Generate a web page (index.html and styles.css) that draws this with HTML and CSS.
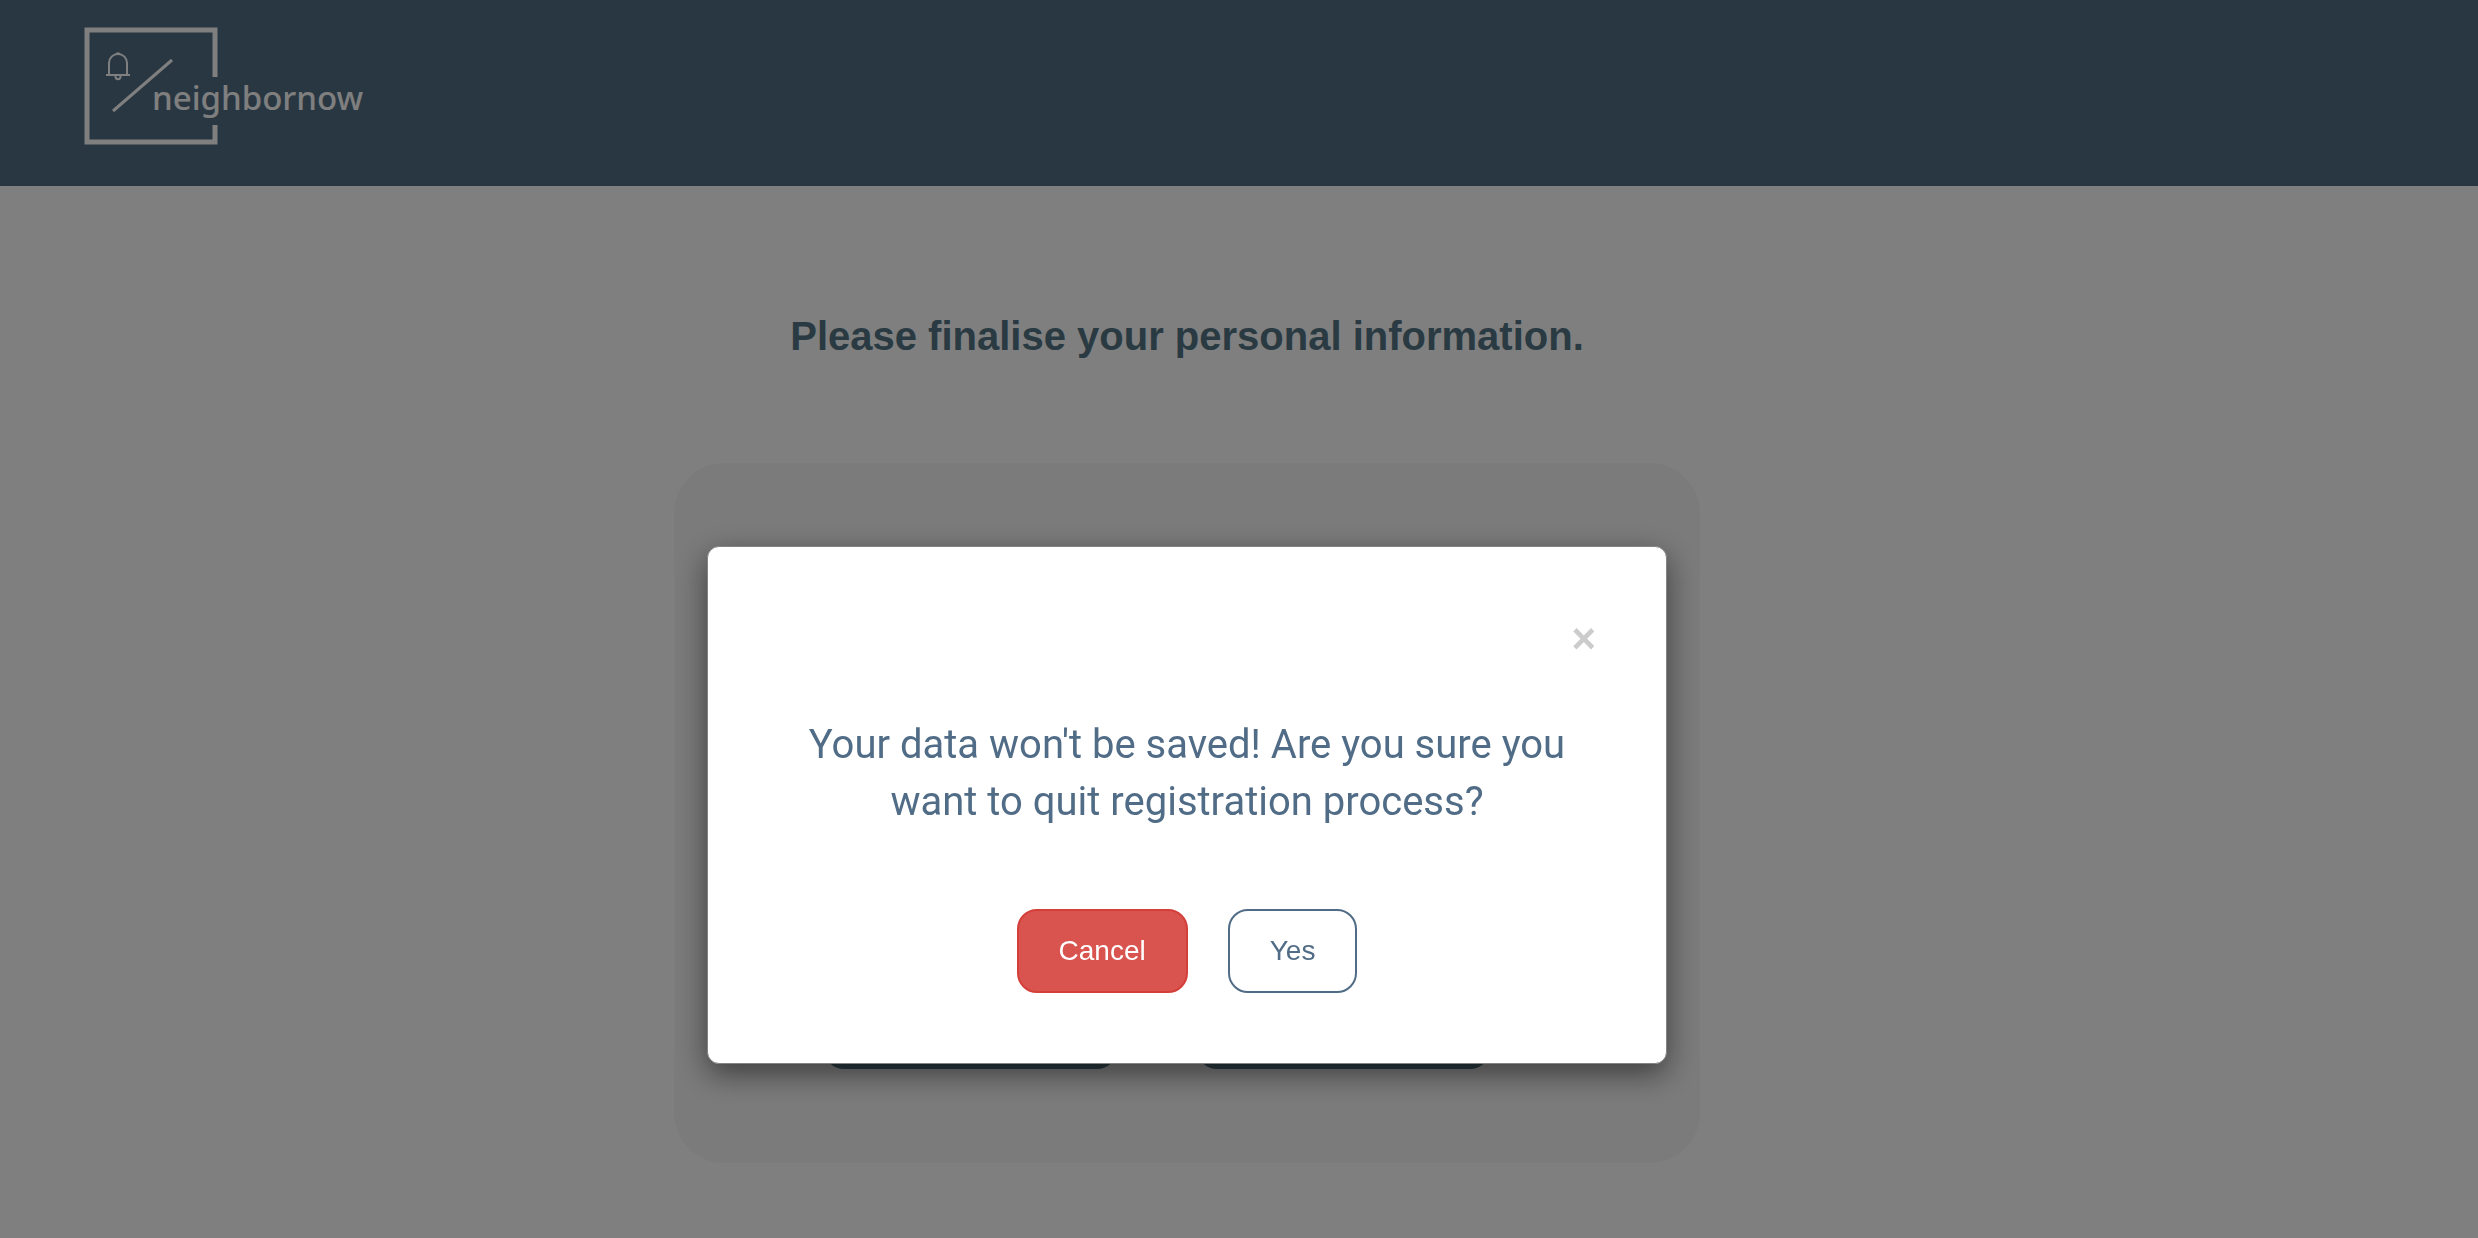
FILE: index.html
```html
<!DOCTYPE html>
<html lang="en">
<head>
  <meta charset="utf-8">
  <meta name="viewport" content="width=device-width, initial-scale=1">
  <title>neighbornow</title>
  <link rel="stylesheet" href="styles.css">
</head>
<body>
  <header class="site-header">
    <a class="logo" href="#" aria-label="neighbornow">
      <svg class="logo-art" viewBox="0 0 280 118" width="280" height="118">
        <path class="logo-frame" d="M131 50V3H3V115H131V98"/>
        <path class="logo-slash" d="M29 84L88 33"/>
        <path class="logo-bell" d="M25 47V36a9 9 0 0 1 18 0V47M22 48H46M31.500 48.500v1a2.500 2.700 0 0 0 5 0v-1"/>
        <path class="logo-knob" d="M31.500 28a2.500 2.700 0 0 1 5 0z"/>
        <text class="logo-name" x="68" y="83">neighbornow</text>
      </svg>
    </a>
  </header>

  <main class="page">
    <h1 class="page-title">Please finalise your personal information.</h1>
    <form class="card">
      <div class="card-actions">
        <button class="card-button" type="button" aria-label="Back"></button>
        <button class="card-button" type="button" aria-label="Next"></button>
      </div>
    </form>
  </main>

  <div class="backdrop">
    <section class="modal" role="dialog" aria-modal="true" aria-labelledby="modal-text">
      <button class="close" type="button" aria-label="Close">×</button>
      <p class="modal-text" id="modal-text">Your data won't be saved! Are you sure you want to quit registration process?</p>
      <div class="modal-actions">
        <button class="button button-danger" type="button">Cancel</button>
        <button class="button button-outline" type="button">Yes</button>
      </div>
    </section>
  </div>
</body>
</html>
```
FILE: styles.css
```css
:root {
  --blue: #516c86;
  --teal: #547484;
  --side: 104px;
}

* {
  box-sizing: border-box;
}

body {
  margin: 0;
  background: #fff;
  color: var(--blue);
  font-family: "Liberation Sans", Arial, sans-serif;
  font-size: 28px;
}

.site-header {
  display: flex;
  padding: 27px 84px 41px;
  background: #526e84;
}

.logo,
.logo-art {
  display: block;
}

.logo-frame,
.logo-slash,
.logo-bell {
  fill: none;
  stroke: #fff;
}

.logo-frame {
  stroke-width: 5;
}

.logo-slash {
  stroke-width: 3;
}

.logo-bell {
  stroke-width: 2;
}

.logo-knob {
  fill: #fff;
}

.logo-name {
  fill: #fff;
  font: 500 33px "Noto Sans", sans-serif;
}

.page {
  display: flex;
  flex-direction: column;
  align-items: center;
  gap: 105px;
  padding: 128px var(--side) 75px 0;
}

.page-title {
  margin: 0;
  color: var(--teal);
  font-size: 40px;
  line-height: 44px;
}

.card {
  display: flex;
  flex-direction: column;
  justify-content: flex-end;
  width: 100%;
  max-width: 1026px;
  min-height: 700px;
  padding: 94px 150px;
  border-radius: 50px;
  background: #f7f7f7;
}

.card-actions {
  display: flex;
  gap: 80px;
  margin-right: 60px;
}

.card-button {
  flex: 1;
  height: 84px;
  border: 0;
  border-radius: 20px;
  background: var(--teal);
}

.backdrop {
  position: fixed;
  inset: 0;
  display: flex;
  justify-content: center;
  align-items: flex-start;
  padding: 546px var(--side) 0 0;
  background: rgba(0, 0, 0, 0.5);
}

.modal {
  display: flex;
  flex-direction: column;
  width: 100%;
  max-width: 960px;
  padding: 71px 70px 70px;
  border: 1px solid #848484;
  border-radius: 12px;
  background: #fff;
  box-shadow: 0 10px 30px rgba(0, 0, 0, 0.5);
}

.close {
  align-self: flex-end;
  padding: 0;
  border: 0;
  background: none;
  color: #ccc;
  font: bold 42px/42px "Liberation Sans", Arial, sans-serif;
}

.modal-text {
  margin: 56px 0 79px;
  font: 400 40px/57px Roboto, sans-serif;
  text-align: center;
}

.modal-actions {
  display: flex;
  justify-content: center;
  gap: 40px;
}

.button {
  padding: 20px 40px;
  border: 2px solid;
  border-radius: 20px;
  font: 28px/40px "Liberation Sans", Arial, sans-serif;
}

.button-danger {
  border-color: #d43f3a;
  background: #d9534f;
  color: #fff;
}

.button-outline {
  border-color: var(--blue);
  background: #fff;
  color: var(--blue);
}
```
